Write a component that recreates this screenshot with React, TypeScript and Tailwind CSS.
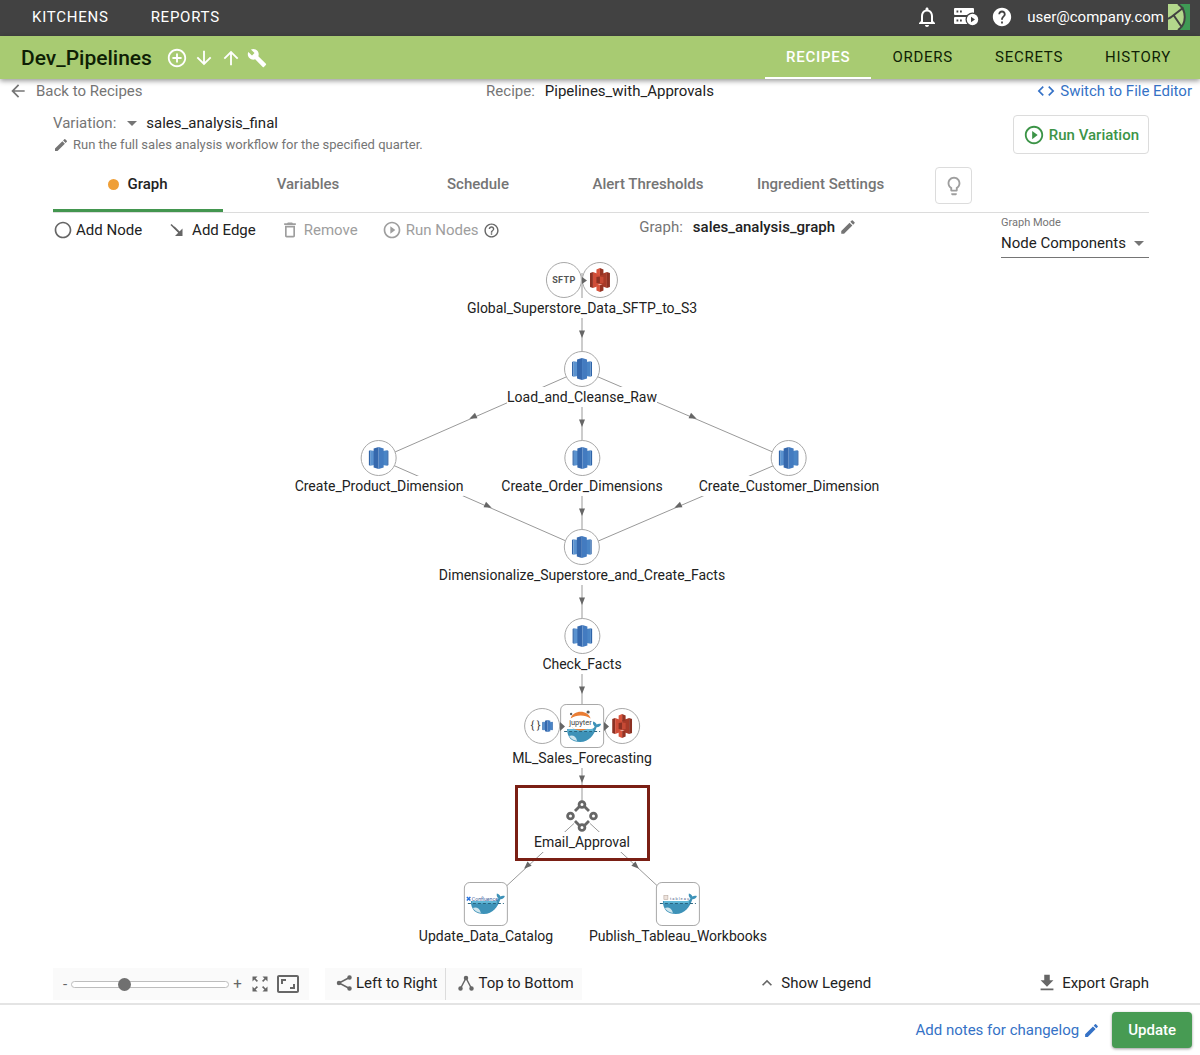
import React from "react";
import {
  MdAddCircleOutline, MdArrowDownward, MdArrowUpward, MdBuild, MdArrowBack, MdCode, MdArrowDropDown,
  MdEdit, MdPlayCircleOutline, MdLightbulbOutline, MdRadioButtonUnchecked, MdDeleteOutline,
  MdHelpOutline, MdHelp, MdNotificationsNone, MdZoomOutMap, MdAspectRatio, MdKeyboardArrowUp, MdFileDownload,
} from "react-icons/md";

function JobsIcon() {
  return (
    <svg width="26" height="20" viewBox="0 0 26 20" fill="none">
      <rect x="1" y="1" width="20" height="7" rx="1" fill="#fff" />
      <rect x="1" y="10" width="20" height="7" rx="1" fill="#fff" />
      <path d="M3.500 3.500h1.800v2H3.500zM7 3.500h1.800v2H7zM3.500 12.500h1.800v2H3.500zM7 12.500h1.800v2H7z" fill="#424242" />
      <circle cx="19.500" cy="12.500" r="7" fill="#424242" />
      <circle cx="19.500" cy="12.500" r="5.700" fill="#fff" />
      <path d="M18 9.700v5.600l4-2.800z" fill="#424242" />
    </svg>
  );
}

function Logo() {
  return (
    <svg width="22" height="26" viewBox="0 0 22 26">
      <rect width="22" height="26" fill="#3f9a55" />
      <path d="M0 0h10c9 6 9 20 0 26H0z" fill="#b3d78c" />
      <path d="M10 0c9 6 9 20 0 26M15.500 3.500L2 14M5.500 11L14 23.500M0 15l3-2" fill="none" stroke="#424242" strokeWidth="2" />
    </svg>
  );
}

function AddEdgeIcon() {
  return (
    <svg width="14" height="14" viewBox="0 0 14 14">
      <path d="M1 1.500L9.500 10" stroke="#666" strokeWidth="1.600" />
      <path d="M12.500 5.500V13H5z" fill="#666" />
      <path d="M4 4L9.500 9.500" stroke="#666" strokeWidth="1.600" />
    </svg>
  );
}

function S3Icon() {
  return (
    <svg width="20" height="24" viewBox="0 0 20 24">
      <path d="M0 5l3-1v16l-3-1z" fill="#8c3123" />
      <path d="M20 5l-3-1v16l3-1z" fill="#8c3123" />
      <path d="M3 4l7 2.500v11L3 20z" fill="#cf4d38" />
      <path d="M17 4l-7 2.500v11l7 2.500z" fill="#a83a28" />
      <path d="M10 0L6.500 1.500v5L10 7.500z" fill="#d9533b" />
      <path d="M10 0l3.500 1.500v5L10 7.500z" fill="#963222" />
      <path d="M10 24l-3.500-1.500v-5l3.500-1z" fill="#d9533b" />
      <path d="M10 24l3.500-1.500v-5l-3.500-1z" fill="#963222" />
      <path d="M6.500 9L10 8.500v7L6.500 15z" fill="#8c3123" />
      <path d="M13.500 9L10 8.500v7l3.500-.5z" fill="#c74a35" />
      <path d="M7.500 16.500L10 16l2.500.5-2.500.7z" fill="#f3b5a6" />
    </svg>
  );
}

function RedshiftIcon({ small }: { small?: boolean }) {
  return (
    <svg width={small ? 11 : 20} height={small ? 12 : 22} viewBox="0 0 20 22">
      <path d="M0 4l1.500-.7v15.400L0 18z" fill="#2f64a8" />
      <path d="M1.500 3.300L6 4v14l-4.500.7z" fill="#5a92cf" />
      <path d="M20 4l-1.500-.7v15.400L20 18z" fill="#2f64a8" />
      <path d="M18.500 3.300L14 4v14l4.500.7z" fill="#4a85c6" />
      <path d="M10 0L5 1.500v19L10 22z" fill="#3568ad" />
      <path d="M10 0l5 1.500v19L10 22z" fill="#437bc0" />
    </svg>
  );
}

function Whale() {
  return (
    <>
      <path d="M4 22h24c2 0 3-1 3.500-2.500-1.500-1.500-2-3-1.500-5 2 .5 3 1.500 3.500 3 1.500-1 3-1 4.500-.5-.5 2-2 3-4.500 3.300C31 28 26 35 17 35 9 35 4 31 4 22z" fill="#3d92b8" />
      <path d="M5 22h25v2.500H5z" fill="#5fb6d6" />
      <path d="M6 29c3-1.500 7 0 8 5C10 33.500 7.500 31.500 6 29z" fill="#cfe6ee" />
      <path d="M1 24.500h36" stroke="#286580" strokeWidth="1" strokeDasharray="3 2" />
    </>
  );
}

function JupyterDocker() {
  return (
    <svg width="42" height="42" viewBox="0 0 42 42">
      <path d="M9.500 13.500C12 4.500 27 4.500 29.500 13.500 24 9.500 15 9.500 9.500 13.500z" fill="#ea7d34" />
      <g transform="translate(2 2)"><Whale /></g>
      <path d="M11 22c3 4.500 14 4.500 17 0-1 1-1.500 1.500-2 2H13c-1-.5-1.500-1-2-2z" fill="#ea7d34" />
      <circle cx="10" cy="9" r="1.200" fill="#5b5b5b" />
      <circle cx="27" cy="7" r="1.600" fill="#5b5b5b" />
      <text x="8" y="20" fontSize="7.500" fontFamily="Roboto, sans-serif" fill="#444">jupyter</text>
    </svg>
  );
}

function ConfluenceDocker() {
  return (
    <svg width="42" height="42" viewBox="0 0 42 42">
      <g transform="translate(2 -4)"><Whale /></g>
      <path d="M2 14l3.500 3.500M5.500 14L2 17.500" stroke="#2671dc" strokeWidth="1.500" />
      <text x="7" y="17.500" fontSize="5.200" fontFamily="Roboto, sans-serif" fill="#3c5e9a">Confluence</text>
    </svg>
  );
}

function TableauDocker() {
  return (
    <svg width="42" height="42" viewBox="0 0 42 42">
      <g transform="translate(2 -4)"><Whale /></g>
      <rect x="7" y="12.500" width="4" height="4" fill="#eee3dc" stroke="#b9aaa0" strokeWidth=".6" />
      <text x="13" y="16.500" fontSize="4" letterSpacing="1" fontFamily="Roboto, sans-serif" fill="#54658a">tableau</text>
    </svg>
  );
}

function ApprovalIcon() {
  return (
    <svg width="32" height="32" viewBox="0 0 32 32" fill="none" stroke="#666" strokeWidth="2.800">
      <circle cx="16" cy="16" r="11" fill="#fff" stroke="none" />
      <path d="M13.500 6.500L9 11M18.500 6.500L23 11M9 21l4.500 4.500M23 21l-4.500 4.500" />
      <g fill="#fff"><circle cx="16" cy="4.500" r="2.900" /><circle cx="4.500" cy="16" r="2.900" /><circle cx="27.500" cy="16" r="2.900" /><circle cx="16" cy="27.500" r="2.900" /></g>
    </svg>
  );
}

function GraphDirectionIcon({ down }: { down?: boolean }) {
  return (
    <svg width="16" height="16" viewBox="0 0 16 16" fill="#666" stroke="#666" strokeWidth="1.500">
      {down ? (
        <><path d="M2.500 13.500L8 3l5.500 10.500" fill="none" /><circle cx="8" cy="3" r="1.500" /><circle cx="2.500" cy="13.500" r="1.500" /><circle cx="13.500" cy="13.500" r="1.500" /></>
      ) : (
        <><path d="M13.500 2.500L3 8l10.500 5.500" fill="none" /><circle cx="3" cy="8" r="1.500" /><circle cx="13.500" cy="2.500" r="1.500" /><circle cx="13.500" cy="13.500" r="1.500" /></>
      )}
    </svg>
  );
}

const edges: number[][] = [
  [301, 15, 301, 112], [301, 112, 98, 201], [301, 112, 301, 201], [301, 112, 508, 201],
  [98, 201, 301, 290], [301, 201, 301, 290], [508, 201, 301, 290], [301, 290, 301, 379],
  [301, 379, 301, 468], [301, 468, 301, 558], [301, 558, 205, 647], [301, 558, 397, 647],
];

const arrows: number[][] = [
  [301, 76, 90], [192, 159, 156], [301, 165, 90], [412, 159, 24], [207, 248, 24], [301, 254, 90],
  [397, 248, 156], [301, 343, 90], [301, 432, 90], [301, 521, 90], [246, 608, 137], [355, 608, 43],
];

const circle = "flex h-9 w-9 items-center justify-center rounded-full border border-[#a8a8a8] bg-white";
const tile = "flex h-11 w-11 items-center justify-center rounded-md border border-[#a8a8a8] bg-white";

type Node = { x: number; y: number; label: string; body: React.ReactNode };

const redshift = <div className={circle}><RedshiftIcon /></div>;

const nodes: Node[] = [
  {
    x: 301, y: 4, label: "Global_Superstore_Data_SFTP_to_S3",
    body: <><div className={circle}><span className="text-[9px] font-bold tracking-wider text-[#555]">SFTP</span></div><div className={circle}><S3Icon /></div></>,
  },
  { x: 301, y: 93, label: "Load_and_Cleanse_Raw", body: redshift },
  { x: 98, y: 182, label: "Create_Product_Dimension", body: redshift },
  { x: 301, y: 182, label: "Create_Order_Dimensions", body: redshift },
  { x: 508, y: 182, label: "Create_Customer_Dimension", body: redshift },
  { x: 301, y: 271, label: "Dimensionalize_Superstore_and_Create_Facts", body: redshift },
  { x: 301, y: 360, label: "Check_Facts", body: redshift },
  {
    x: 301, y: 446, label: "ML_Sales_Forecasting",
    body: <><div className={circle}><span className="mr-0.5 text-[11px] text-[#444]">{"{ }"}</span><RedshiftIcon small /></div><div className={tile}><JupyterDocker /></div><div className={circle}><S3Icon /></div></>,
  },
  { x: 301, y: 542, label: "Email_Approval", body: <ApprovalIcon /> },
  { x: 205, y: 624, label: "Update_Data_Catalog", body: <div className={tile}><ConfluenceDocker /></div> },
  { x: 397, y: 624, label: "Publish_Tableau_Workbooks", body: <div className={tile}><TableauDocker /></div> },
];

function GraphCanvas() {
  return (
    <div className="relative mx-auto h-[710px] w-[640px]">
      <svg className="absolute inset-0" width="640" height="710">
        {edges.map(([a, b, c, d], i) => <line key={i} x1={a} y1={b} x2={c} y2={d} stroke="#999" />)}
        {arrows.map(([x, y, r], i) => <path key={i} d="M-3.500 -3L4 0L-3.500 3z" transform={`translate(${x} ${y}) rotate(${r})`} fill="#666" />)}
      </svg>
      {nodes.map((n) => (
        <div key={n.label} className="absolute flex -translate-x-1/2 flex-col items-center" style={{ left: n.x, top: n.y }}>
          <div className="flex items-center">{n.body}</div>
          <span className="bg-white text-[14px] leading-5">{n.label}</span>
        </div>
      ))}
      <svg className="absolute inset-0" width="640" height="710" fill="#666">
        <path d="M301 19l5 3.500l-5 3.500zM279 464l5 4.500l-5 4.500zM323 464l5 4.500l-5 4.500z" />
      </svg>
      <div className="absolute left-[234px] top-[527px] h-[76px] w-[135px] border-3 border-[#7a1f14]" />
    </div>
  );
}

const tabs = ["Variables", "Schedule", "Alert Thresholds", "Ingredient Settings"];

export default function App() {
  return (
    <div className="font-[Roboto,sans-serif] min-h-[1055px] bg-white text-[15px] leading-5 text-[#222]">
      <header className="flex h-9 items-center bg-[#424242] pb-0.5 pl-8 pr-[10px] text-white">
        <nav className="flex gap-[42px] tracking-wider">
          <a href="#kitchens">KITCHENS</a>
          <a href="#reports">REPORTS</a>
        </nav>
        <div className="ml-auto flex items-center">
          <button aria-label="Notifications"><MdNotificationsNone size={24} /></button>
          <button aria-label="Jobs" className="ml-3.5"><JobsIcon /></button>
          <button aria-label="Help" className="ml-3"><MdHelp size={22} /></button>
          <a href="#account" className="ml-3.5 mr-1">user@company.com</a>
          <Logo />
        </div>
      </header>

      <div className="relative flex h-[43px] items-center bg-[#a8cb72] pl-[21px] pr-2 shadow-[0_2px_5px_rgba(0,0,0,0.4)]">
        <h1 className="text-[21px] font-medium text-[#0f1f05]">Dev_Pipelines</h1>
        <div className="ml-3.5 flex items-center gap-[5px] text-white">
          <button aria-label="Add"><MdAddCircleOutline size={22} /></button>
          <button aria-label="Pull"><MdArrowDownward size={22} /></button>
          <button aria-label="Push"><MdArrowUpward size={22} /></button>
          <button aria-label="Settings"><MdBuild size={20} /></button>
        </div>
        <nav className="ml-auto flex h-full tracking-wider text-[#0f1f05]">
          <a href="#recipes" className="flex items-center border-b-2 border-white px-[21px] font-medium text-white">RECIPES</a>
          <a href="#orders" className="flex items-center border-b-2 border-transparent px-[21px]">ORDERS</a>
          <a href="#secrets" className="flex items-center border-b-2 border-transparent px-[21px]">SECRETS</a>
          <a href="#history" className="flex items-center border-b-2 border-transparent px-[21px]">HISTORY</a>
        </nav>
      </div>

      <div className="flex h-[27px] items-center justify-between px-2 pb-[3px] text-[#757575]">
        <a href="#back" className="flex flex-1 items-center gap-2"><MdArrowBack size={20} />Back to Recipes</a>
        <div>Recipe:<span className="ml-2.5 text-[#222]">Pipelines_with_Approvals</span></div>
        <a href="#editor" className="flex flex-1 items-center justify-end gap-1 text-[#3572c6]"><MdCode size={20} />Switch to File Editor</a>
      </div>

      <main className="pl-[53px] pr-[51px]">
        <div className="flex justify-between">
          <div className="pt-[5px]">
            <button className="flex items-center text-[#757575]">Variation:<MdArrowDropDown size={24} className="ml-1" /><span className="ml-0.5 text-[#222]">sales_analysis_final</span></button>
            <p className="flex items-center gap-1 text-[13px] text-[#757575]"><MdEdit size={16} />Run the full sales analysis workflow for the specified quarter.</p>
          </div>
          <button className="mt-[9px] flex h-[39px] items-center gap-1 rounded border border-[#dcdcdc] px-[9px] font-medium text-[#3c9447]"><MdPlayCircleOutline size={22} />Run Variation</button>
        </div>

        <div className="flex h-[58px] border-b border-[#dcdcdc] font-medium text-[#757575]">
          <button className="flex w-[170px] items-center justify-center gap-2 border-b-3 border-[#43964f] pt-1 text-[#222]"><span className="h-[11px] w-[11px] rounded-full bg-[#ef9f37]" />Graph</button>
          {tabs.map((t) => <button key={t} className="min-w-[170px] border-b-3 border-transparent px-6 pt-1">{t}</button>)}
          <button aria-label="Tips" className="ml-[27px] mt-3 flex h-[37px] w-[37px] items-center justify-center rounded border border-[#dcdcdc] text-[#9e9e9e]"><MdLightbulbOutline size={22} /></button>
        </div>

        <div className="flex h-[45px] items-start">
          <div className="mt-[7px] flex items-center">
            <button className="flex items-center gap-[3px]"><MdRadioButtonUnchecked size={20} className="text-[#666]" />Add Node</button>
            <button className="ml-7 flex items-center gap-2"><AddEdgeIcon />Add Edge</button>
            <button className="ml-6 flex items-center gap-1 text-[#9e9e9e]"><MdDeleteOutline size={20} />Remove</button>
            <button className="ml-6 flex items-center gap-1 text-[#9e9e9e]"><MdPlayCircleOutline size={20} />Run Nodes</button>
            <button aria-label="Run help" className="ml-1 text-[#666]"><MdHelpOutline size={17} /></button>
          </div>
          <div className="ml-auto mt-1 flex items-center text-[#757575]">Graph:<span className="ml-2.5 mr-1 font-medium text-[#222]">sales_analysis_graph</span><MdEdit size={18} /></div>
          <div className="ml-[144px] w-[148px] border-b border-[#757575] pt-0.5">
            <label htmlFor="mode" className="block text-[11px] leading-4 text-[#757575]">Graph Mode</label>
            <div className="relative">
              <select id="mode" className="block h-[26px] w-full appearance-none bg-transparent pb-0.5"><option>Node Components</option></select>
              <MdArrowDropDown size={24} className="pointer-events-none absolute -right-0.5 top-0 text-[#757575]" />
            </div>
          </div>
        </div>

        <GraphCanvas />

        <div className="flex h-8 items-center">
          <div className="flex h-full w-[256px] items-center bg-[#fafafa] pl-2.5 text-[#666]">
            <span>-</span>
            <input aria-label="Zoom" type="range" defaultValue={32} className="mx-1 h-[7px] w-[158px] appearance-none rounded-full border border-[#bdbdbd] bg-white [&::-webkit-slider-thumb]:h-[13px] [&::-webkit-slider-thumb]:w-[13px] [&::-webkit-slider-thumb]:appearance-none [&::-webkit-slider-thumb]:rounded-full [&::-webkit-slider-thumb]:bg-[#707070]" />
            <span>+</span>
            <button aria-label="Fit" className="ml-2"><MdZoomOutMap size={20} /></button>
            <button aria-label="Actual size" className="ml-1.5"><MdAspectRatio size={24} /></button>
          </div>
          <div className="ml-4 flex h-full bg-[#fafafa]">
            <button className="flex items-center gap-1 border-r border-[#dcdcdc] pb-0.5 pl-[11px] pr-2"><GraphDirectionIcon />Left to Right</button>
            <button className="flex items-center gap-1 pb-0.5 pl-3 pr-2"><GraphDirectionIcon down />Top to Bottom</button>
          </div>
          <button className="ml-auto flex items-center gap-1 pb-0.5"><MdKeyboardArrowUp size={20} className="text-[#666]" />Show Legend</button>
          <button className="ml-[165px] flex items-center gap-1 pb-0.5"><MdFileDownload size={22} className="text-[#666]" />Export Graph</button>
        </div>
      </main>

      <footer className="mt-[3px] flex h-[52px] items-center justify-end gap-3 border-t-2 border-[#e4e4e4] pr-2">
        <button className="flex items-center gap-1 text-[#3572c6]">Add notes for changelog<MdEdit size={17} /></button>
        <button className="h-9 rounded bg-[#479b53] px-4 font-medium text-white shadow-[0_1px_3px_rgba(0,0,0,0.4)]">Update</button>
      </footer>
    </div>
  );
}
